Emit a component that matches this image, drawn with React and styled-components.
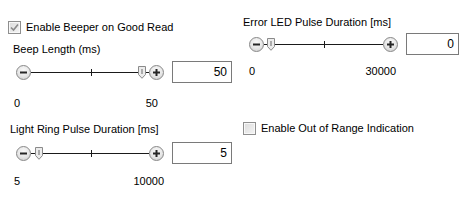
import React from "react";
import styled, { createGlobalStyle } from "styled-components";

const Global = createGlobalStyle`
  html, body { margin: 0; padding: 0; background: #ffffff; }
  body { font-family: "Liberation Sans", Arial, sans-serif; font-size: 11px; color: #000; }
`;

const Page = styled.div`
  width: 466px;
  height: 202px;
  display: grid;
  grid-template-columns: 235px 231px;
  background: #fff;
  overflow: hidden;
`;

const Column = styled.div`
  display: flex;
  flex-direction: column;
  padding-left: ${(p) => p.$pad || 0}px;
`;

const CheckRow = styled.label`
  display: flex;
  align-items: center;
  gap: 5px;
  height: 14px;
  margin-top: ${(p) => p.$mt || 0}px;
  padding-left: ${(p) => p.$pl || 0}px;
  white-space: nowrap;
`;

const Box = styled.span`
  width: 11px;
  height: 11px;
  border: 1px solid #8f8f8f;
  background: linear-gradient(135deg, #dcdcdc, #f4f4f4);
  box-shadow: inset 0 0 0 1px #f8f8f8;
  display: flex;
  align-items: center;
  justify-content: center;
  flex: none;
`;

const FieldLabel = styled.div`
  height: 14px;
  line-height: 14px;
  margin-top: ${(p) => p.$mt || 0}px;
  padding-left: ${(p) => p.$pl || 0}px;
  white-space: nowrap;
`;

const SliderRow = styled.div`
  display: flex;
  align-items: center;
  height: 22px;
  margin-top: ${(p) => p.$mt || 0}px;
  padding-left: ${(p) => p.$pl || 0}px;
`;

const RoundButton = styled.span`
  width: 13px;
  height: 13px;
  border-radius: 50%;
  border: 1px solid #888888;
  background: radial-gradient(circle at 50% 35%, #fafafa 0%, #e6e6e6 55%, #c8c8c8 100%);
  display: flex;
  align-items: center;
  justify-content: center;
  flex: none;
`;

const Track = styled.div`
  position: relative;
  width: ${(p) => p.$w}px;
  height: 13px;
  flex: none;
`;

const Line = styled.div`
  position: absolute;
  left: 0;
  right: 0;
  top: 6px;
  height: 1px;
  background: #1a1a1a;
`;

const Tick = styled.div`
  position: absolute;
  top: 3px;
  width: 1px;
  height: 7px;
  background: #1a1a1a;
`;

const Thumb = styled.svg`
  position: absolute;
  top: 0;
`;

const NumberBox = styled.div`
  width: ${(p) => p.$w}px;
  height: 22px;
  border: 1px solid #7a7a7a;
  margin-left: ${(p) => p.$ml}px;
  display: flex;
  align-items: center;
  justify-content: flex-end;
  padding-right: 4px;
  box-sizing: border-box;
  flex: none;
  font-size: 12px;
`;

const RangeRow = styled.div`
  display: flex;
  justify-content: space-between;
  width: ${(p) => p.$w}px;
  height: 14px;
  line-height: 14px;
  margin-top: ${(p) => p.$mt || 0}px;
  margin-left: ${(p) => p.$pl || 0}px;
`;

const Minus = () => (
  <RoundButton>
    <svg width="9" height="9" viewBox="0 0 9 9">
      <rect x="1" y="3.5" width="7" height="2" fill="#262626" />
    </svg>
  </RoundButton>
);

const Plus = () => (
  <RoundButton>
    <svg width="9" height="9" viewBox="0 0 9 9">
      <rect x="1" y="3.5" width="7" height="2" fill="#262626" />
      <rect x="3.5" y="1" width="2" height="7" fill="#262626" />
    </svg>
  </RoundButton>
);

const Slider = ({ width, thumbPos, value, boxWidth, boxGap, pl, mt }) => (
  <SliderRow $pl={pl} $mt={mt}>
    <Minus />
    <Track $w={width}>
      <Line />
      <Tick style={{ left: 60 }} />
      <Thumb width="8" height="13" viewBox="0 0 8 13" style={{ left: thumbPos }}>
        <path
          d="M0.5 0.5 H7.5 V8.5 L4 12.3 L0.5 8.5 Z"
          fill="#ececec"
          stroke="#8a8a8a"
          strokeWidth="1"
        />
        <rect x="3.5" y="3" width="1" height="5" fill="#6a6a6a" />
      </Thumb>
    </Track>
    <Plus />
    <NumberBox $w={boxWidth} $ml={boxGap}>
      {value}
    </NumberBox>
  </SliderRow>
);

const Check = ({ checked, children, mt, pl }) => (
  <CheckRow $mt={mt} $pl={pl}>
    <Box>
      {checked && (
        <svg width="9" height="9" viewBox="0 0 9 9">
          <path d="M1 4.5 L3.5 7 L8 1.5" fill="none" stroke="#8a8a8a" strokeWidth="1.6" />
        </svg>
      )}
    </Box>
    <span>{children}</span>
  </CheckRow>
);

export default function App() {
  return (
    <>
      <Global />
      <Page>
        <Column>
          <Check checked mt={20} pl={8}>Enable Beeper on Good Read</Check>
          <FieldLabel $mt={8} $pl={13}>Beep Length (ms)</FieldLabel>
          <Slider pl={16} mt={5} width={118} thumbPos={107} value="50" boxWidth={60} boxGap={8} />
          <RangeRow $mt={13} $pl={14} $w={144}>
            <span>0</span>
            <span>50</span>
          </RangeRow>
          <FieldLabel $mt={12} $pl={10}>Light Ring Pulse Duration [ms]</FieldLabel>
          <Slider pl={16} mt={6} width={118} thumbPos={4} value="5" boxWidth={60} boxGap={8} />
          <RangeRow $mt={10} $pl={14} $w={150}>
            <span>5</span>
            <span>10000</span>
          </RangeRow>
        </Column>
        <Column $pad={8}>
          <FieldLabel $mt={15}>Error LED Pulse Duration [ms]</FieldLabel>
          <Slider pl={6} mt={4} width={119} thumbPos={3} value="0" boxWidth={53} boxGap={8} />
          <RangeRow $mt={9} $pl={6} $w={147}>
            <span>0</span>
            <span>30000</span>
          </RangeRow>
          <Check mt={43} pl={0}>Enable Out of Range Indication</Check>
        </Column>
      </Page>
    </>
  );
}
